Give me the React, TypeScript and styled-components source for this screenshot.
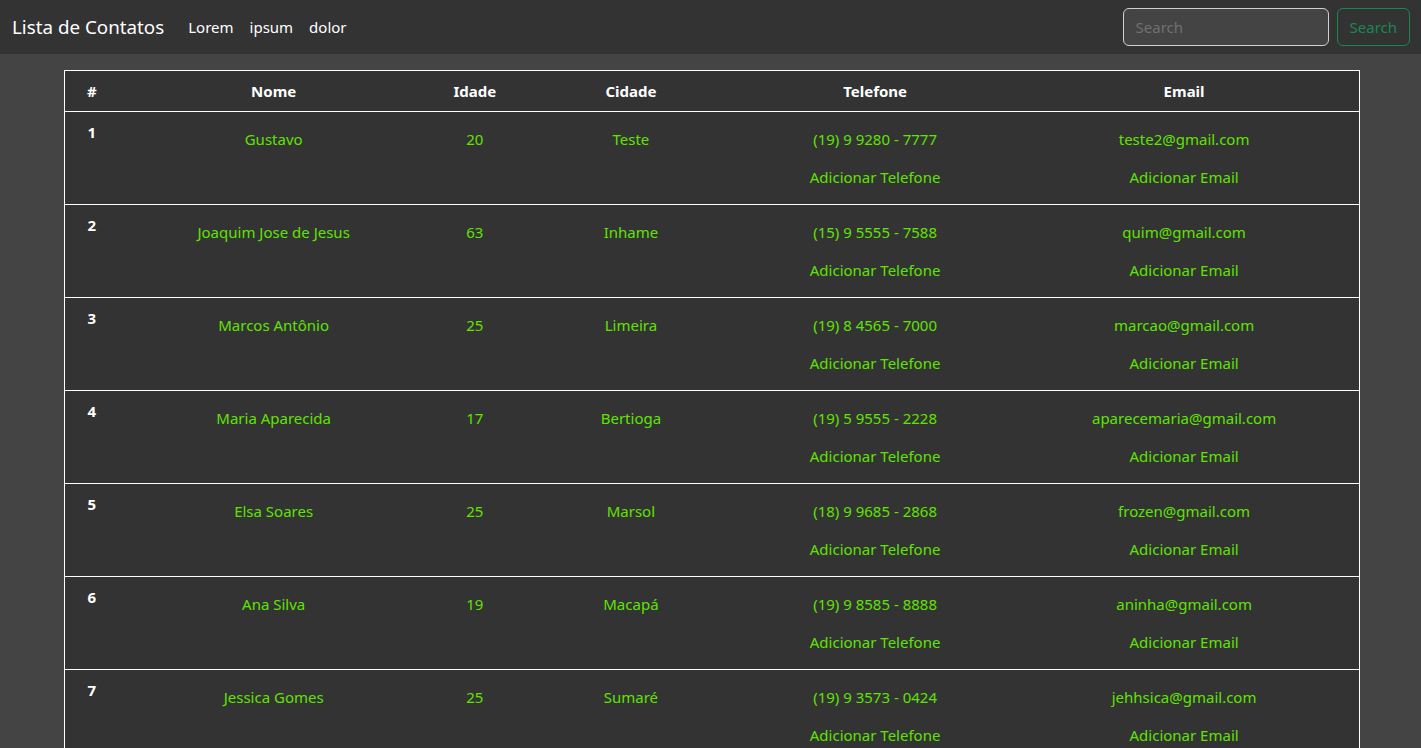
import React from "react";
import styled, { createGlobalStyle } from "styled-components";

const Global = createGlobalStyle`
  * { box-sizing: border-box; }
  body {
    margin: 0;
    background: #444444;
    font-family: "Segoe UI", "Noto Sans", "Open Sans", sans-serif;
    font-size: 15px;
    line-height: 24px;
    color: #fff;
  }
`;

const Nav = styled.nav`
  height: 54px;
  background: #333333;
  display: flex;
  align-items: center;
  padding: 0 11px 0 12px;
`;

const Brand = styled.span`
  font-size: 18.8px;
  color: #fff;
  margin-right: 24px;
  white-space: nowrap;
`;

const Links = styled.div`
  display: flex;
  gap: 16px;
  flex: 1;
`;

const NavLink = styled.a`
  color: #fff;
  font-size: 15px;
  text-decoration: none;
`;

const Form = styled.form`
  display: flex;
  gap: 8px;
`;

const Input = styled.input`
  width: 206px;
  height: 38px;
  background: #444444;
  border: 1px solid #d0d0d0;
  border-radius: 6px;
  padding: 6px 12px;
  font: inherit;
  color: #fff;
  &::placeholder { color: #707070; }
`;

const SearchButton = styled.button`
  height: 38px;
  padding: 6px 12px;
  background: transparent;
  border: 1px solid #198754;
  border-radius: 6px;
  color: #198754;
  font: inherit;
`;

const Main = styled.main`
  padding: 16px 61px 0 64px;
`;

const Table = styled.table`
  width: 100%;
  border-collapse: collapse;
  background: #333333;
  border: 1px solid #ffffff;
`;

const Th = styled.th<{ $w: number }>`
  width: ${(p) => p.$w}px;
  padding: 8px;
  font-weight: 700;
  text-align: center;
  color: #fff;
  border-bottom: 1px solid #fff;
`;

const Tr = styled.tr`
  border-bottom: 1px solid #fff;
`;

const IndexCell = styled.td`
  padding: 8px;
  font-weight: 700;
  vertical-align: top;
  text-align: center;
  color: #fff;
`;

const Td = styled.td`
  padding: 8px 0;
  vertical-align: top;
  text-align: center;
`;

const Item = styled.div`
  height: 38px;
  line-height: 38px;
  color: #5fe300;
  white-space: nowrap;
`;

const contacts = [
  ["Gustavo", "20", "Teste", "(19) 9 9280 - 7777", "teste2@gmail.com"],
  ["Joaquim Jose de Jesus", "63", "Inhame", "(15) 9 5555 - 7588", "quim@gmail.com"],
  ["Marcos Antônio", "25", "Limeira", "(19) 8 4565 - 7000", "marcao@gmail.com"],
  ["Maria Aparecida", "17", "Bertioga", "(19) 5 9555 - 2228", "aparecemaria@gmail.com"],
  ["Elsa Soares", "25", "Marsol", "(18) 9 9685 - 2868", "frozen@gmail.com"],
  ["Ana Silva", "19", "Macapá", "(19) 9 8585 - 8888", "aninha@gmail.com"],
  ["Jessica Gomes", "25", "Sumaré", "(19) 9 3573 - 0424", "jehhsica@gmail.com"],
];

const headers: [string, number][] = [
  ["#", 54],
  ["Nome", 310],
  ["Idade", 92],
  ["Cidade", 220],
  ["Telefone", 268],
  ["Email", 350],
];

export default function App() {
  return (
    <>
      <Global />
      <Nav>
        <Brand>Lista de Contatos</Brand>
        <Links>
          <NavLink href="#">Lorem</NavLink>
          <NavLink href="#">ipsum</NavLink>
          <NavLink href="#">dolor</NavLink>
        </Links>
        <Form onSubmit={(e) => e.preventDefault()}>
          <Input placeholder="Search" />
          <SearchButton type="submit">Search</SearchButton>
        </Form>
      </Nav>
      <Main>
        <Table>
          <thead>
            <tr>
              {headers.map(([h, w]) => (
                <Th key={h} $w={w}>{h}</Th>
              ))}
            </tr>
          </thead>
          <tbody>
            {contacts.map((c, i) => (
              <Tr key={i}>
                <IndexCell>{i + 1}</IndexCell>
                <Td><Item>{c[0]}</Item></Td>
                <Td><Item>{c[1]}</Item></Td>
                <Td><Item>{c[2]}</Item></Td>
                <Td>
                  <Item>{c[3]}</Item>
                  <Item>Adicionar Telefone</Item>
                </Td>
                <Td>
                  <Item>{c[4]}</Item>
                  <Item>Adicionar Email</Item>
                </Td>
              </Tr>
            ))}
          </tbody>
        </Table>
      </Main>
    </>
  );
}
